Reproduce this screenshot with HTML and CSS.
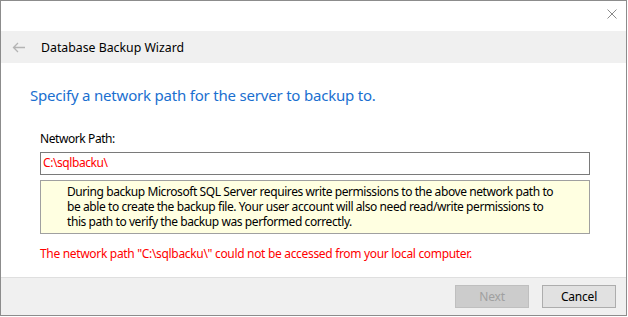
FILE: index.html
```html
<!DOCTYPE html>
<html lang="en">
<head>
<meta charset="utf-8">
<title>Database Backup Wizard</title>
<link rel="stylesheet" href="styles.css">
</head>
<body>
<div class="window">
  <div class="titlebar">
    <svg class="close" width="10" height="10" viewBox="0 0 10 10"><path d="M0.5 0.5L9.5 9.5M9.5 0.5L0.5 9.5" stroke="#8a8a8a" stroke-width="1" fill="none"/></svg>
  </div>
  <div class="header">
    <svg class="back" width="14" height="11" viewBox="0 0 14 11"><path d="M13 5.5H1.5M6 1L1.5 5.5L6 10" stroke="#b4b4b4" stroke-width="1.3" fill="none"/></svg>
    <span class="header-title">Database Backup Wizard</span>
  </div>
  <div class="content">
    <h1 class="instruction">Specify a network path for the server to backup to.</h1>
    <div class="form">
      <div class="label">Network Path:</div>
      <div class="input">C:\sqlbacku\</div>
      <div class="info">During backup Microsoft SQL Server requires write permissions to the above network path to be able to create the backup file. Your user account will also need read/write permissions to this path to verify the backup was performed correctly.</div>
      <div class="error">The network path "C:\sqlbacku\" could not be accessed from your local computer.</div>
    </div>
  </div>
  <div class="footer">
    <button class="btn btn-disabled" disabled>Next</button>
    <button class="btn">Cancel</button>
  </div>
</div>
</body>
</html>
```
FILE: styles.css
```css
html, body {
  margin: 0;
  padding: 0;
  background: #ffffff;
}
body {
  font-family: "Noto Sans", "Open Sans", sans-serif;
  font-size: 12px;
  letter-spacing: -0.42px;
  color: #000;
}
.window {
  width: 627px;
  height: 316px;
  box-sizing: border-box;
  border: 1px solid #8c8c8c;
  display: flex;
  flex-direction: column;
  background: #fff;
}
.titlebar {
  height: 30px;
  display: flex;
  justify-content: flex-end;
  align-items: flex-start;
  padding: 8px 9px 0 0;
  box-sizing: border-box;
}
.close { display: block; }
.header {
  height: 32px;
  background: #f0f0f0;
  display: flex;
  align-items: center;
  padding-left: 11px;
}
.back { display: block; margin-right: 15px; }
.header-title {
  font-size: 12.3px;
  letter-spacing: 0;
  color: #000;
}
.content {
  flex: 1;
  padding: 22px 0 0 29px;
}
.instruction {
  margin: 0;
  font-size: 15px;
  letter-spacing: -0.2px;
  font-weight: normal;
  color: #1a6fd0;
  line-height: 21px;
}
.form {
  margin: 25px 36px 0 10px;
}
.label {
  line-height: 16px;
}
.input {
  margin-top: 5px;
  height: 23px;
  box-sizing: border-box;
  border: 1px solid #7a7a7a;
  color: #ff0000;
  padding: 0 2px;
  line-height: 20px;
}
.info {
  margin-top: 5px;
  background: #ffffe1;
  border: 1px solid #a0a0a0;
  padding: 3px 25px 4px 26px;
  line-height: 15px;
}
.error {
  margin-top: 12px;
  color: #ff0000;
  letter-spacing: -0.32px;
  line-height: 16px;
}
.footer {
  height: 38px;
  box-sizing: border-box;
  background: #f0f0f0;
  border-top: 1px solid #dfdfdf;
  display: flex;
  justify-content: flex-end;
  align-items: center;
  gap: 13px;
  padding-right: 10px;
}
.btn {
  width: 74px;
  height: 23px;
  font-family: inherit;
  font-size: 12px;
  letter-spacing: -0.2px;
  background: #e1e1e1;
  border: 1px solid #adadad;
  color: #000;
  padding: 0;
  margin: 0;
}
.btn-disabled {
  background: #cccccc;
  border-color: #bfbfbf;
  color: #a0a0a0;
}
```
